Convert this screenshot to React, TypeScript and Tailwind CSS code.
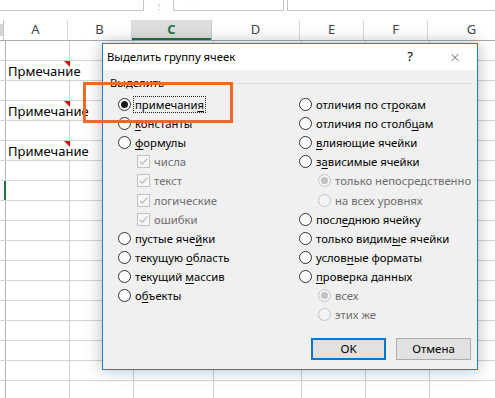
import { X } from "lucide-react";

type Col = { id: string; w: string; sel?: boolean };

const cols: Col[] = [
  { id: "A", w: "w-[64px]" },
  { id: "B", w: "w-[64px]" },
  { id: "C", w: "w-[80px]", sel: true },
  { id: "D", w: "w-[88px]" },
  { id: "E", w: "w-[64px]" },
  { id: "F", w: "w-[64px]" },
  { id: "G", w: "w-[88px]" },
];

// row number (1-based) -> text in column A
const notes: Record<number, string> = {
  2: "Прмечание",
  4: "Примечание",
  6: "Примечание",
};

type Item = {
  kind: "radio" | "check";
  label: string;
  checked?: boolean;
  disabled?: boolean;
  indent?: boolean;
  focus?: boolean;
};

const leftItems: Item[] = [
  { kind: "radio", label: "примечани&я", checked: true, focus: true },
  { kind: "radio", label: "&константы" },
  { kind: "radio", label: "&формулы" },
  { kind: "check", label: "числа", checked: true, disabled: true, indent: true },
  { kind: "check", label: "текст", checked: true, disabled: true, indent: true },
  { kind: "check", label: "логические", checked: true, disabled: true, indent: true },
  { kind: "check", label: "ошибки", checked: true, disabled: true, indent: true },
  { kind: "radio", label: "пустые яче&йки" },
  { kind: "radio", label: "текущую &область" },
  { kind: "radio", label: "текущий &массив" },
  { kind: "radio", label: "о&бъекты" },
];

const rightItems: Item[] = [
  { kind: "radio", label: "отличия по ст&рокам" },
  { kind: "radio", label: "отличия по столб&цам" },
  { kind: "radio", label: "&влияющие ячейки" },
  { kind: "radio", label: "з&ависимые ячейки" },
  { kind: "radio", label: "только непосредственно", checked: true, disabled: true, indent: true },
  { kind: "radio", label: "на всех уровнях", disabled: true, indent: true },
  { kind: "radio", label: "посл&еднюю ячейку" },
  { kind: "radio", label: "только видим&ые ячейки" },
  { kind: "radio", label: "услов&ные форматы" },
  { kind: "radio", label: "&проверка данных" },
  { kind: "radio", label: "всех", checked: true, disabled: true, indent: true },
  { kind: "radio", label: "этих же", disabled: true, indent: true },
];

// "&" marks the access key letter, the way Windows dialogs write it
function AccessLabel({ text }: { text: string }) {
  const i = text.indexOf("&");
  if (i < 0) return <>{text}</>;
  return (
    <>
      {text.slice(0, i)}
      <span className="underline decoration-1 underline-offset-[2px]">{text[i + 1]}</span>
      {text.slice(i + 2)}
    </>
  );
}

function RadioDot({ checked, disabled }: { checked?: boolean; disabled?: boolean }) {
  return (
    <span
      className={`flex h-[13px] w-[13px] shrink-0 items-center justify-center rounded-full border ${
        disabled ? "border-[#c2c2c2] bg-[#f4f4f4]" : "border-[#333333] bg-white"
      }`}
    >
      {checked && (
        <span className={`h-[7px] w-[7px] rounded-full ${disabled ? "bg-[#c2c2c2]" : "bg-[#1b1b1b]"}`} />
      )}
    </span>
  );
}

function CheckBox({ checked, disabled }: { checked?: boolean; disabled?: boolean }) {
  return (
    <span
      className={`flex h-[13px] w-[13px] shrink-0 items-center justify-center border ${
        disabled ? "border-[#c2c2c2] bg-[#f7f7f7]" : "border-[#333333] bg-white"
      }`}
    >
      {checked && (
        <svg width="11" height="11" viewBox="0 0 11 11" aria-hidden="true">
          <polyline
            points="1.8,5.6 4.3,8.2 9.4,2.6"
            fill="none"
            stroke={disabled ? "#b8b8b8" : "#222"}
            strokeWidth="1.2"
          />
        </svg>
      )}
    </span>
  );
}

function Option({ item }: { item: Item }) {
  return (
    <div className={`flex h-[19.1px] items-center gap-[4px] ${item.indent ? "pl-[19px]" : ""}`}>
      {item.kind === "radio" ? (
        <RadioDot checked={item.checked} disabled={item.disabled} />
      ) : (
        <CheckBox checked={item.checked} disabled={item.disabled} />
      )}
      <span
        className={`whitespace-nowrap leading-[13px] ${item.disabled ? "text-[#6d6d6d]" : "text-black"} ${
          item.focus ? "-ml-[2px] border border-dotted border-[#222] px-[1px] py-[1px]" : ""
        }`}
      >
        <AccessLabel text={item.label} />
      </span>
    </div>
  );
}

function SelectDialog() {
  return (
    <div className="absolute left-[102px] top-[43px] flex h-[327px] w-[376px] flex-col border border-[#1b7fd3] bg-[#f0f0f0] font-['Noto_Sans',sans-serif] text-[11.3px] shadow-[0_0_16px_rgba(0,0,0,0.28)]">
      <div className="flex h-[26px] shrink-0 items-center bg-white pl-[4px]">
        <span className="text-[11.3px] text-black">Выделить группу ячеек</span>
        <span className="ml-auto w-[12px] text-center text-[13px] text-black">?</span>
        <span className="ml-[33px] mr-[16px] flex w-[12px] justify-center">
          <X className="size-[13px] text-black" strokeWidth={1.2} />
        </span>
      </div>

      <div className="flex flex-1 flex-col pl-[7px] pr-[5px] pt-[6px] pb-[9px]">
        <div className="flex h-[14px] items-center gap-[4px]">
          <span className="leading-[14px] text-black">Выделить</span>
          <span className="h-px flex-1 bg-[#dcdcdc]" />
        </div>

        <div className="mt-[5px] flex">
          <div className="w-[189px] pl-[8px]">
            {leftItems.map((it) => (
              <Option key={it.label} item={it} />
            ))}
          </div>
          <div className="flex-1">
            {rightItems.map((it) => (
              <Option key={it.label} item={it} />
            ))}
          </div>
        </div>

        <div className="mt-auto flex justify-end gap-[10px] pr-[1px]">
          <button
            type="button"
            className="h-[22px] w-[75px] border-2 border-[#0078d7] bg-[#e1e1e1] text-[11.5px] text-black"
          >
            OK
          </button>
          <button
            type="button"
            className="h-[22px] w-[75px] border border-[#adadad] bg-[#e1e1e1] text-[11.5px] text-black"
          >
            Отмена
          </button>
        </div>
      </div>
    </div>
  );
}

function FormulaStrip() {
  return (
    <div className="flex h-[20px] bg-white">
      <div className="h-[11px] w-[144px] border-b border-r border-[#c6c6c6]" />
      <div className="flex w-[29px] justify-center">
        <span className="text-[8px] leading-[12px] text-[#9a9a9a]">⋮</span>
      </div>
      <div className="flex h-[11px] w-[111px] items-end border-b border-l border-r border-[#c6c6c6] text-[#c8c8c8]">
        <span className="ml-[14px] h-[4px] overflow-hidden">
          <X className="-mt-[9px] size-[12px]" strokeWidth={1.5} />
        </span>
      </div>
      <div className="ml-[3px] h-[11px] flex-1 border-b border-l border-[#c6c6c6]" />
    </div>
  );
}

function Sheet() {
  const rows = Array.from({ length: 18 }, (_, i) => i + 1);
  return (
    <div className="font-['Noto_Sans',sans-serif]">
      <div className="flex h-[21px] border-b border-[#ababab] bg-white">
        <div className="flex w-[6px] items-center border-r border-[#c6c6c6]">
          <span className="h-[12px] w-[3px] bg-[#d6d6d6]" />
        </div>
        {cols.map((c) => (
          <div
            key={c.id}
            className={`${c.w} flex shrink-0 items-center justify-center border-r text-[13px] ${
              c.sel
                ? "border-[#c6c6c6] bg-[#dedede] font-bold text-[#217346] shadow-[inset_0_-2px_0_#217346]"
                : "border-[#dadada] text-[#444444]"
            }`}
          >
            {c.id}
          </div>
        ))}
      </div>

      {rows.map((r) => {
        const note = notes[r];
        return (
          <div key={r} className="flex h-[20px] border-b border-[#d4d4d4]">
            <div className={`w-[6px] shrink-0 border-r ${r === 8 ? "border-r-2 border-[#217346]" : "border-[#b4b4b4]"}`} />
            {cols.map((c, ci) => (
              <div
                key={c.id}
                className={`${c.w} relative flex shrink-0 items-end ${
                  ci === 0 && note ? "" : "border-r border-[#d4d4d4]"
                }`}
              >
                {ci === 0 && note && (
                  <>
                    <span className="whitespace-nowrap pb-[1px] pl-[2px] text-[13px] leading-[16px] text-black">
                      {note}
                    </span>
                    <svg className="absolute right-0 top-0" width="6" height="6" viewBox="0 0 6 6" aria-hidden="true">
                      <polygon points="0,0 6,0 6,6" fill="#e00000" />
                    </svg>
                  </>
                )}
              </div>
            ))}
          </div>
        );
      })}
    </div>
  );
}

export default function App() {
  return (
    <div className="relative h-[398px] w-[495px] overflow-hidden bg-white">
      <FormulaStrip />
      <Sheet />
      <SelectDialog />
      {/* orange call-out round the selected option */}
      <div className="absolute left-[83px] top-[82px] h-[41px] w-[150px] border-[3px] border-[#f0692a]" />
    </div>
  );
}
